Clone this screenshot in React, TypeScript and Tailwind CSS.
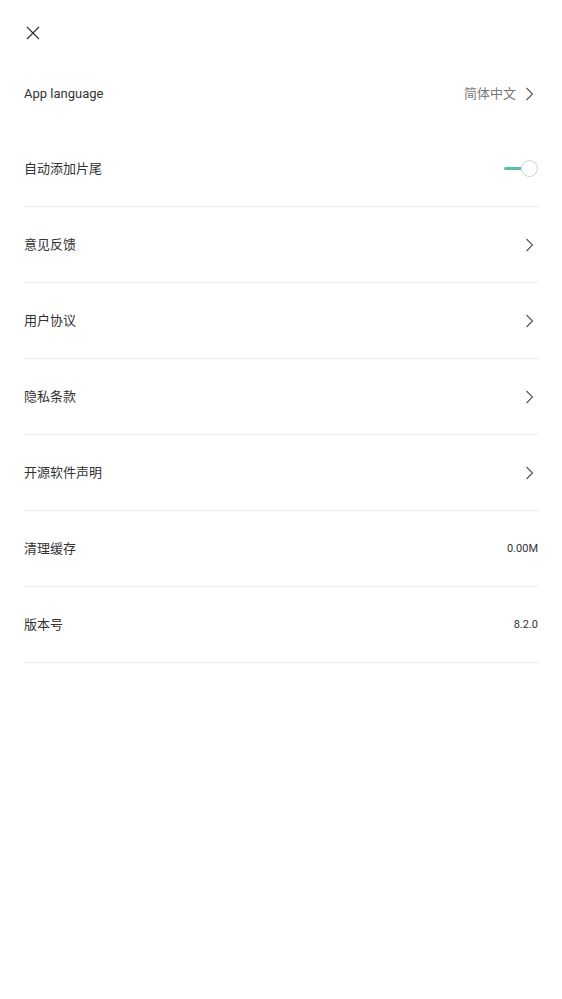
import React from "react";

const Chevron = () => (
  <svg width="10" height="16" viewBox="0 0 10 16" fill="none" className="ml-2">
    <path d="M2.5 2 L8.5 8 L2.5 14" stroke="#555" strokeWidth="1.1" />
  </svg>
);

const Row = ({ label, right }: { label: string; right?: React.ReactNode }) => (
  <div className="flex items-center justify-between h-[76px] border-b border-[#ebebeb]">
    <span className="text-[13px] text-[#333]">{label}</span>
    <div className="flex items-center">{right}</div>
  </div>
);

const App = () => {
  return (
    <div
      className="w-[562px] min-h-[999px] bg-white px-6"
      style={{ fontFamily: "Roboto, 'Noto Sans CJK SC', sans-serif" }}
    >
      <div className="h-[57px] flex items-center">
        <svg width="16" height="16" viewBox="0 0 16 16" className="mt-[8px] ml-[1px]">
          <path d="M2 2 L14 14 M14 2 L2 14" stroke="#333" strokeWidth="1.2" />
        </svg>
      </div>
      <div className="flex items-center justify-between h-[74px]">
        <span className="text-[13px] text-[#333]">App language</span>
        <div className="flex items-center pr-[4px]">
          <span className="text-[13px] text-[#777]">简体中文</span>
          <Chevron />
        </div>
      </div>
      <Row
        label="自动添加片尾"
        right={
          <div className="flex items-center">
            <div className="w-[17px] h-[3px] bg-[#5cbfa8] rounded-l-full" />
            <div className="w-[17px] h-[17px] rounded-full border border-[#cfcfcf] bg-white" />
          </div>
        }
      />
      <Row label="意见反馈" right={<div className="pr-[4px]"><Chevron /></div>} />
      <Row label="用户协议" right={<div className="pr-[4px]"><Chevron /></div>} />
      <Row label="隐私条款" right={<div className="pr-[4px]"><Chevron /></div>} />
      <Row label="开源软件声明" right={<div className="pr-[4px]"><Chevron /></div>} />
      <Row label="清理缓存" right={<span className="text-[11px] text-[#333] mt-[2px]">0.00M</span>} />
      <Row label="版本号" right={<span className="text-[11px] text-[#333] mt-[2px]">8.2.0</span>} />
    </div>
  );
};

export default App;
